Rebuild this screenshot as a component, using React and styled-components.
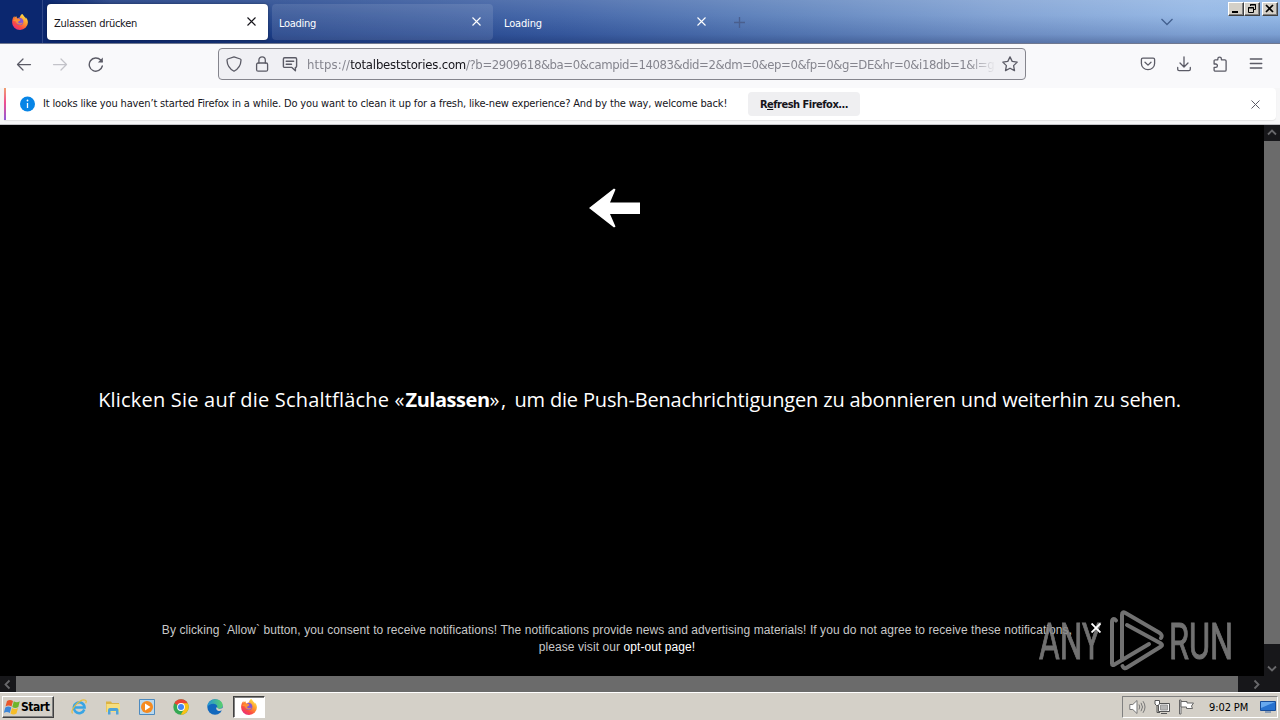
import React from 'react';
import styled, { createGlobalStyle, css } from 'styled-components';

const GlobalStyle = createGlobalStyle`
  * { box-sizing: border-box; }
  html, body { margin: 0; padding: 0; background: #000; }
  body { width: 1280px; height: 720px; overflow: hidden; font: 11px "DejaVu Sans Condensed", "DejaVu Sans", sans-serif; }
  svg { display: block; flex: none; }
`;

const Screen = styled.div`
  position: relative;
  width: 1280px;
  height: 720px;
  display: flex;
  flex-direction: column;
  overflow: hidden;
`;

const Txt = styled.span`
  white-space: pre;
  letter-spacing: ${(p) => p.$ls || 0}px;
`;

/* tab strip */
const TabStrip = styled.header`
  height: 44px;
  flex: none;
  display: flex;
  align-items: flex-start;
  border-bottom: 1px solid #70788f;
  background:
    linear-gradient(90deg, #0b276f 0, #0b276f 43px, transparent 110px),
    linear-gradient(180deg, rgba(255,255,255,0.14) 0, rgba(255,255,255,0.06) 35%, rgba(0,20,90,0.14) 80%, rgba(0,15,70,0.32) 100%),
    linear-gradient(90deg, #0b276f 0, #0e2c75 50px, #1f428b 260px, #3c60a5 560px, #5b80bb 780px, #7d9fd2 1000px, #91b5e4 1200px, #8fb6e6 1280px);
`;
const BrandSlot = styled.div`
  width: 43px;
  height: 43px;
  padding: 14px 0 0 12px;
  border-right: 1px solid #2f4787;
`;
const Tabs = styled.div`
  display: flex;
  gap: 4px;
  padding: 4px 0 0 4px;
`;
const Tab = styled.div`
  width: 221px;
  height: 36px;
  border-radius: 4px;
  display: flex;
  align-items: center;
  justify-content: space-between;
  padding: 2px 12px 0 7px;
  color: #fff;
  ${(p) => p.$state === 'active' && css`background: #fff; color: #15141a; box-shadow: 0 0 3px rgba(0,0,0,0.4);`}
  ${(p) => p.$state === 'hover' && css`background: rgba(255,255,255,0.11);`}
`;
const TabClose = styled.div`padding-bottom: 3px;`;
const NewTab = styled.div`padding: 17px 0 0 16px;`;
const ListTabs = styled.div`
  margin-left: auto;
  padding: 17px 55px 0 0;
`;
const WindowButtons = styled.div`
  display: flex;
  padding: 2px 2px 0 0;
`;
const WinButton = styled.div`
  width: 16px;
  height: 14px;
  margin-left: ${(p) => (p.$gap ? 2 : 0)}px;
  background: #d4d0c8;
  border: 1px solid;
  border-color: #fff #404040 #404040 #fff;
  box-shadow: inset -1px -1px 0 #808080;
`;

/* toolbar */
const Toolbar = styled.div`
  height: 44px;
  flex: none;
  display: flex;
  align-items: center;
  padding: 0 16px 4px;
  background: #f9f9fb;
  color: #5b5b66;
`;
const NavGroup = styled.div`
  display: flex;
  gap: 20px;
  width: 202px;
`;
const UrlBar = styled.div`
  width: 808px;
  height: 32px;
  border: 1px solid #85858d;
  border-radius: 4px;
  background: #f0f0f4;
  display: flex;
  align-items: center;
  padding: 0 7px;
`;
const UrlIcons = styled.div`
  display: flex;
  gap: 12px;
  margin-right: 9px;
`;
const Url = styled.div`
  flex: 1;
  overflow: hidden;
  white-space: pre;
  font-size: 13px;
  line-height: 20px;
  padding-top: 2px;
  color: #85858e;
  -webkit-mask-image: linear-gradient(90deg, #000 calc(100% - 28px), transparent);
  mask-image: linear-gradient(90deg, #000 calc(100% - 28px), transparent);
`;
const UrlHost = styled(Txt)`color: #15141a;`;
const StarSlot = styled.div`margin-left: 6px;`;
const ActionGroup = styled.div`
  display: flex;
  gap: 20px;
  margin-left: auto;
`;

/* notification bar */
const NoticeArea = styled.div`
  height: 37px;
  flex: none;
  background: #f6f6f7;
  border-bottom: 1px solid #c4c4c8;
  padding: 0 4px;
`;
const Notice = styled.div`
  height: 32px;
  display: flex;
  align-items: center;
  background: #fff;
  border-radius: 0 4px 4px 0;
  box-shadow: 0 1px 1px rgba(0,0,0,0.08);
  color: #15141a;
  padding-right: 16px;
  &::before {
    content: '';
    width: 2px;
    height: 32px;
    margin-right: 14px;
    background: linear-gradient(180deg, #f0a070, #f04f8f 45%, #9059d8);
  }
`;
const NoticeText = styled.div`
  margin-left: 8px;
  width: 705px;
  padding-bottom: 1px;
`;
const RefreshButton = styled.div`
  width: 112px;
  height: 24px;
  border-radius: 4px;
  background: #efeff1;
  text-align: center;
  font-weight: 700;
  line-height: 25px;
  u { text-underline-offset: 1px; }
`;
const NoticeClose = styled.div`margin-left: auto;`;

/* web page */
const Viewport = styled.main`
  height: 551px;
  flex: none;
  display: flex;
  background: #000;
`;
const Page = styled.div`
  width: 1264px;
  display: flex;
  flex-direction: column;
  align-items: center;
  color: #fff;
`;
const ArrowSlot = styled.div`
  height: 104px;
  padding: 63px 35px 0 0;
`;
const Headline = styled.div`
  margin-top: 156px;
  padding-left: 15px;
  white-space: pre;
  font: 20px/30px "Open Sans", sans-serif;
`;
const ConsentRow = styled.div`
  margin-top: 207px;
  align-self: stretch;
  padding-left: 152px;
  display: flex;
  color: #c8c8c8;
`;
const Consent = styled.div`
  width: 930px;
  text-align: center;
  font: 12px/17px "Liberation Sans", Arial, sans-serif;
  white-space: pre;
`;
const OptOut = styled(Txt)`color: #fff;`;
const ConsentClose = styled.div`
  position: relative;
  z-index: 2;
  padding: 1px 0 0 9px;
`;
const VScroll = styled.div`
  width: 16px;
  display: flex;
  flex-direction: column;
  background: #17171a;
`;
const ScrollButton = styled.div`
  width: 16px;
  height: 16px;
  display: flex;
  align-items: center;
  justify-content: center;
  background: #17171a;
  margin-top: ${(p) => (p.$end ? 'auto' : 0)};
`;
const VThumb = styled.div`
  height: 503px;
  background: #6b6b6b;
`;
const HScroll = styled.div`
  height: 16px;
  flex: none;
  display: flex;
  background: #17171a;
`;
const HThumb = styled.div`
  width: 1222px;
  background: #6b6b6b;
  margin-right: 11px;
`;
const Watermark = styled.div`
  position: absolute;
  left: 1036px;
  top: 606px;
  opacity: 0.85;
`;

/* taskbar */
const Taskbar = styled.footer`
  height: 28px;
  flex: none;
  display: flex;
  align-items: center;
  padding: 1px 2px 0;
  background: #d4d0c8;
  border-top: 1px solid #fff;
  color: #000;
`;
const StartButton = styled.div`
  width: 52px;
  height: 22px;
  display: flex;
  align-items: center;
  padding-left: 1px;
  font-size: 12px;
  font-weight: 700;
  border: 1px solid;
  border-color: #fff #404040 #404040 #fff;
  box-shadow: inset -1px -1px 0 #808080;
`;
const QuickLaunch = styled.div`
  display: flex;
  align-items: center;
  gap: 18px;
  margin-left: 17px;
`;
const TaskButton = styled.div`
  width: 32px;
  height: 22px;
  margin-left: 10px;
  display: flex;
  align-items: center;
  justify-content: center;
  background: #fff;
  border: 1px solid;
  border-color: #404040 #fff #fff #404040;
  box-shadow: inset 1px 1px 0 #808080;
`;
const Tray = styled.div`
  margin-left: auto;
  width: 156px;
  height: 22px;
  display: flex;
  align-items: center;
  padding-left: 6px;
  border: 1px solid;
  border-color: #808080 #fff #fff #808080;
`;
const TrayIcons = styled.div`
  display: flex;
  gap: 8px;
  width: 80px;
`;
const Clock = styled.div`width: 51px;`;

const Firefox = ({ size = 16 }) => (
  <svg width={size} height={size} viewBox="0 0 16 16">
    <defs>
      <linearGradient id="fx" x1="0.85" y1="0.1" x2="0.2" y2="1">
        <stop offset="0" stopColor="#ffe14a" /><stop offset="0.35" stopColor="#ff9a2c" />
        <stop offset="0.7" stopColor="#fb4a44" /><stop offset="1" stopColor="#e62a86" />
      </linearGradient>
    </defs>
    <path d="M15.3 5.5c-.4-.9-1.100-1.800-1.700-2.100.3.700.5 1.300.5 1.700-.9-2.100-2.300-2.900-3.500-4.900L10.100 0C8.500 1 8 2.600 7.900 3.600c-.8 0-1.600.3-2.200.8C4.900 3.900 4.500 3 4.400 2.200c-.7.300-1.300.9-1.700 1.400-.3-.4-.3-1.400-.3-1.700C1.300 2.700.1 5.200.1 8.200a7.900 7.700 0 0 0 15.800.2c0-1-.2-2-.6-2.900z" fill="url(#fx)" />
    <path d="M4.600 7.200c.8-.9 1.800-.6 2.500-.5.700-.1 1.300-.6 1.300-.6-.6-1.200-2-1.500-3-1.500.8-1 2.700-1.200 4-.3 2 1.200 2.500 3.500 1.600 5.100-1.400 2.500-5.400 2.100-6.500-.2z" fill="#8355d6" />
    <path d="M1 7c.8-1.600 2.400-2 4.300-1.300.9.300 1.800.3 3 .4-.5.900-1.500 1-2 1.600-.3.500 0 1.500 1.500 1.600 1.200 0 1.800-.9 3-.6-1 1.600-3.300 2.300-5 1.300C3.900 9 4.300 7.600 3.200 7z" fill="#ff9433" opacity=".9" />
  </svg>
);

const Cross = ({ size = 9, color = 'currentColor', w = 1.1 }) => (
  <svg width={size} height={size} viewBox="0 0 9 9" stroke={color} strokeWidth={w} fill="none"><path d="M.5.5l8 8M8.500.5l-8 8" /></svg>
);

const Ico = ({ children, color = '#5b5b66', w = 1.25 }) => (
  <svg width="16" height="16" viewBox="0 0 16 16" fill="none" stroke={color} strokeWidth={w} strokeLinecap="round" strokeLinejoin="round">{children}</svg>
);

const chevrons = { up: 'M2 6.500l4-4 4 4', down: 'M2 3.500l4 4 4-4', left: 'M7.500 1.500l-4 4 4 4', right: 'M3.500 1.500l4 4-4 4' };
const ScrollChevron = ({ dir }) => (
  <svg width="12" height="11" viewBox="0 0 12 11" fill="none" stroke="#68686b" strokeWidth="1.8"><path d={chevrons[dir]} /></svg>
);

const AnyRunMark = () => (
  <svg width="204" height="68" viewBox="0 0 204 68">
    <g fill="#858585" stroke="#858585" strokeWidth="1" fontFamily="Roboto, sans-serif" fontSize="50">
      <text x="3" y="53" textLength="62" lengthAdjust="spacingAndGlyphs">ANY</text>
      <text x="133" y="53" textLength="64" lengthAdjust="spacingAndGlyphs">RUN</text>
    </g>
    <g fill="none" stroke="#858585" strokeWidth="4" strokeLinecap="round" strokeLinejoin="round">
      <path d="M80 14.500C78 12 76 13 76 16V57.500Q76 60 78.500 58.500L113 38" />
      <path d="M86 54V9Q86 5 89.500 7L123 26.500Q127 29 125 32" />
      <path d="M91 19L125 37.500Q127 39 125 40.500L91 61.500Q88 63.500 86.500 60" />
    </g>
  </svg>
);

export default function App() {
  return (
    <Screen>
      <GlobalStyle />
      <TabStrip>
        <BrandSlot><Firefox /></BrandSlot>
        <Tabs>
          <Tab $state="active"><Txt $ls={-0.28}>Zulassen drücken</Txt><TabClose><Cross /></TabClose></Tab>
          <Tab $state="hover"><Txt $ls={-0.28}>Loading</Txt><TabClose><Cross /></TabClose></Tab>
          <Tab><Txt $ls={-0.15}>Loading</Txt><TabClose><Cross /></TabClose></Tab>
        </Tabs>
        <NewTab><svg width="11" height="11" viewBox="0 0 11 11" stroke="#4a5f8e" strokeWidth="1.300"><path d="M5.500 0v11M0 5.500h11" /></svg></NewTab>
        <ListTabs><svg width="12" height="10" viewBox="0 0 12 10" fill="none" stroke="#43608f" strokeWidth="1.300"><path d="M.5 2l5.500 5.500L11.500 2" /></svg></ListTabs>
        <WindowButtons>
          <WinButton><svg width="14" height="12" viewBox="0 0 14 12"><path d="M3 8h6v2H3z" /></svg></WinButton>
          <WinButton><svg width="14" height="12" viewBox="0 0 14 12" fill="none" stroke="#000"><path d="M5.500 3V1.500h5v5H9M5 2h6" /><path d="M3.500 4.500h5v5h-5zM3 5h6" /></svg></WinButton>
          <WinButton $gap><svg width="14" height="12" viewBox="0 0 14 12" stroke="#000" strokeWidth="1.700"><path d="M3 2l7 7M10 2l-7 7" /></svg></WinButton>
        </WindowButtons>
      </TabStrip>

      <Toolbar>
        <NavGroup>
          <Ico><path d="M14.500 8.500h-13M7 3L1.500 8.500 7 14" /></Ico>
          <Ico color="#c3c3c9"><path d="M1.500 8.500h13M9 3l5.500 5.500L9 14" /></Ico>
          <Ico w={1.4}><path d="M14.300 10A6.600 6.600 0 1 1 12.700 4.100L14 5.400" /><path d="M14.800 1.500v5h-5z" fill="#5b5b66" stroke="none" /></Ico>
        </NavGroup>
        <UrlBar>
          <UrlIcons>
            <Ico w={1.3}><path d="M8 .9L14.300 3c.6.200.8.600.7 1.200-.2 5-2.300 8.500-7 11-4.700-2.500-6.800-6-7-11 0-.6.200-1 .7-1.200z" /></Ico>
            <Ico w={1.3}><rect x="2.600" y="7" width="11" height="8.200" rx="1.500" /><path d="M4.900 7V4a3.200 3.200 0 0 1 6.400 0V7" /></Ico>
            <Ico w={1.4}><path d="M2.600 1.800h10.800c.7 0 1.200.5 1.200 1.200v7.200c0 .7-.5 1.200-1.200 1.200v3.300L9.900 11.400H2.600c-.7 0-1.200-.5-1.200-1.200V3c0-.7.5-1.200 1.200-1.200zM4.200 5.200h7.500M4.200 8.200h5.300" /></Ico>
          </UrlIcons>
          <Url>
            <Txt $ls={0.15}>https://</Txt>
            <UrlHost $ls={-0.2}>totalbeststories.com</UrlHost>
            <Txt $ls={-0.42}>/?b=2909618&amp;ba=0&amp;campid=14083&amp;did=2&amp;dm=0&amp;ep=0&amp;fp=0&amp;g=DE&amp;hr=0&amp;i18db=1&amp;l=g</Txt>
          </Url>
          <StarSlot><Ico w={1.3}><path d="M8 .9l2.200 4.500 5 .7-3.600 3.500.9 5L8 12.200l-4.500 2.400.9-5L.8 6.100l5-.7z" /></Ico></StarSlot>
        </UrlBar>
        <ActionGroup>
          <Ico w={1.3}><path d="M2.800 2.200h10.400c.8 0 1.400.6 1.400 1.400v3.800a6.600 6.300 0 0 1-13.200 0V3.600c0-.8.6-1.400 1.400-1.400z" /><path d="M5 6.200l3 2.900 3-2.900" /></Ico>
          <Ico w={1.3}><path d="M8 .8v10M4 7l4 4 4-4M1.700 11.500v1.800c0 .8.600 1.400 1.400 1.400h9.800c.8 0 1.400-.6 1.400-1.400v-1.800" /></Ico>
          <Ico w={1.3}><path d="M5.800 3.800V2.900a1.800 1.800 0 0 1 3.600 0v.9h3.500c.7 0 1.200.5 1.200 1.200v9c0 .700-.5 1.200-1.200 1.200H3.300c-.7 0-1.200-.5-1.200-1.200v-2.600h1.600a1.700 1.700 0 0 0 0-3.400H2.100V5c0-.7.500-1.200 1.200-1.200z" /></Ico>
          <Ico w={1.3}><path d="M2.300 3h11.500M2.300 7.500h11.500M2.300 12h11.500" /></Ico>
        </ActionGroup>
      </Toolbar>

      <NoticeArea>
        <Notice>
          <svg width="15" height="16" viewBox="0 0 15 16"><circle cx="7.500" cy="8" r="7.500" fill="#0785e6" /><path d="M7.500 7v5" stroke="#fff" strokeWidth="1.300" /><circle cx="7.500" cy="4.500" r=".9" fill="#fff" /></svg>
          <NoticeText><Txt $ls={-0.147}>It looks like you haven’t started Firefox in a while. Do you want to clean it up for a fresh, like-new experience? And by the way, welcome back!</Txt></NoticeText>
          <RefreshButton><Txt $ls={-0.5}>R<u>e</u>fresh Firefox...</Txt></RefreshButton>
          <NoticeClose><Cross color="#5b5b66" w={1} /></NoticeClose>
        </Notice>
      </NoticeArea>

      <Viewport>
        <Page>
          <ArrowSlot>
            <svg width="51" height="40" viewBox="0 0 51 40" fill="#fff"><path d="M0 20L25 0.500 26.500 1.500 21 14.500H51V26H21L26.500 38.500 25 39.500z" /></svg>
          </ArrowSlot>
          <Headline>
            <Txt $ls={0.2}>Klicken Sie auf die Schaltfläche </Txt>
            <Txt $ls={1}>«</Txt>
            <Txt as="b" $ls={-0.46}>Zulassen</Txt>
            <Txt $ls={1.5}>», </Txt>
            <Txt $ls={-0.16}>um die Push-Benachrichtigungen zu abonnieren und weiterhin zu sehen.</Txt>
          </Headline>
          <ConsentRow>
            <Consent>
              <Txt $ls={0.08}>By clicking `Allow` button, you consent to receive notifications! The notifications provide news and advertising materials! If you do not agree to receive these notifications,</Txt>
              <br />
              <Txt $ls={0.08}>please visit our </Txt><OptOut $ls={0.08}>opt-out page!</OptOut>
            </Consent>
            <ConsentClose><Cross size={10} color="#fff" w={1.7} /></ConsentClose>
          </ConsentRow>
        </Page>
        <VScroll>
          <ScrollButton><ScrollChevron dir="up" /></ScrollButton>
          <VThumb />
          <ScrollButton $end><ScrollChevron dir="down" /></ScrollButton>
        </VScroll>
      </Viewport>
      <HScroll>
        <ScrollButton><ScrollChevron dir="left" /></ScrollButton>
        <HThumb />
        <ScrollButton><ScrollChevron dir="right" /></ScrollButton>
      </HScroll>

      <Taskbar>
        <StartButton>
          <svg width="17" height="16" viewBox="0 0 17 16">
            <path d="M3 2q3-2 6 0L7.500 7.500q-3-2-6 0z" fill="#e8562a" /><path d="M9.800 2.300q3 2 6 0L14.300 8q-3 2-6 0z" fill="#6fb52c" />
            <path d="M1.300 8.500q3-2 6 0L5.800 14q-3-2-6 0z" fill="#3c86d8" /><path d="M8 9q3 2 6 0l-1.500 5.500q-3 2-6 0z" fill="#f6bd28" />
          </svg>
          <Txt $ls={-0.45}>Start</Txt>
        </StartButton>
        <QuickLaunch>
          <svg width="16" height="16" viewBox="0 0 16 16" fill="none"><path d="M13.300 10.500A5.400 5.400 0 1 1 13.600 8.500H4" stroke="#39a5e4" strokeWidth="2.500" /><path d="M1.500 14.500C-1 11 9-1 14.500 1.200c1 .5.700 2 .2 3" stroke="#e8bd3d" strokeWidth="1.200" /></svg>
          <svg width="16" height="16" viewBox="0 0 16 16"><path d="M1 2.500h5l1 1.500h7v9H1z" fill="#dcb345" /><path d="M1.500 5h13.500v8H1.500z" fill="#f7de7e" /><path d="M3 15.500V11q0-2 2-2h6.500q2 0 2 2v4.500H11V12H5.500v3.500z" fill="#4fa3d8" /></svg>
          <svg width="16" height="16" viewBox="0 0 16 16"><path d="M.5.500h15v15H.5z" fill="#b9d8ee" stroke="#4d8abf" /><circle cx="8" cy="8" r="6" fill="#f58a1f" /><path d="M6 4.500L11.500 8 6 11.500z" fill="#fff" /></svg>
          <svg width="16" height="16" viewBox="0 0 16 16"><circle cx="8" cy="8" r="7.700" fill="#34a853" /><path d="M8 8L1.300 4.200A7.700 7.700 0 0 1 14.700 4.200z" fill="#ea4335" /><path d="M8 4.300h6.700A7.700 7.700 0 0 1 7.700 15.700L11.300 9.800z" fill="#fbc116" /><circle cx="8" cy="8" r="3.900" fill="#fff" /><circle cx="8" cy="8" r="3" fill="#4285f4" /></svg>
          <svg width="16" height="16" viewBox="0 0 16 16"><defs><linearGradient id="edge"><stop offset="0" stopColor="#2594d8" /><stop offset="1" stopColor="#5ad16b" /></linearGradient></defs><circle cx="8" cy="8" r="7.700" fill="#1268bd" /><path d="M.3 8C.5 3.500 4 .3 8.300.3c4.500 0 7.400 3 7.400 6 0 2.200-1.700 3.600-3.900 3.600-1.500 0-2.200-.5-1.800-1.100C11 7.200 9.600 5 6.700 4.800 3.800 4.700 1.200 6 .3 8z" fill="url(#edge)" /><path d="M9.500 8.300c-1.200 2.500 1.500 4.700 5.300 3.300l1.200 1.500V9l-4 1z" fill="#d4d0c8" /></svg>
        </QuickLaunch>
        <TaskButton><Firefox /></TaskButton>
        <Tray>
          <TrayIcons>
            <svg width="17" height="16" viewBox="0 0 17 16" fill="none" stroke="#777"><path d="M.8 5.500h3L8 1.500v13l-4.200-4h-3z" fill="#fff" /><path d="M10 5.500q1.500 2.500 0 5M12 3.800q3 4.200 0 8.400M14 2.200q4 5.800 0 11.600" /></svg>
            <svg width="16" height="16" viewBox="0 0 16 16" fill="none" stroke="#555"><path d="M4.500 4.500h11v8h-11z" fill="#fff" /><path d="M6.500 6h7v5h-7z" fill="#b5b5b5" stroke="#999" /><path d="M7 14.500h6M3 6v7.500h3" /><path d="M1 1.500h4.500V5L4 6.500H2.500L1 5z" fill="#fff" /></svg>
            <svg width="17" height="16" viewBox="0 0 17 16" fill="#fff" stroke="#666"><path d="M1.500 1v14h1.500V1z" /><path d="M3 2.500h6v1.500h6.500l-2 3 1 2.500H8.500V8H3z" /></svg>
          </TrayIcons>
          <Clock><Txt $ls={-0.1}>9:02 PM</Txt></Clock>
          <svg width="16" height="14" viewBox="0 0 16 14"><path d="M.5 1.500h15v9H.5z" fill="#2872cf" stroke="#184d99" /><path d="M1 2h14L1 8z" fill="#67a8ee" /><path d="M5 11h6v2H5z" fill="#8b9db5" /></svg>
        </Tray>
      </Taskbar>
      <Watermark><AnyRunMark /></Watermark>
    </Screen>
  );
}
